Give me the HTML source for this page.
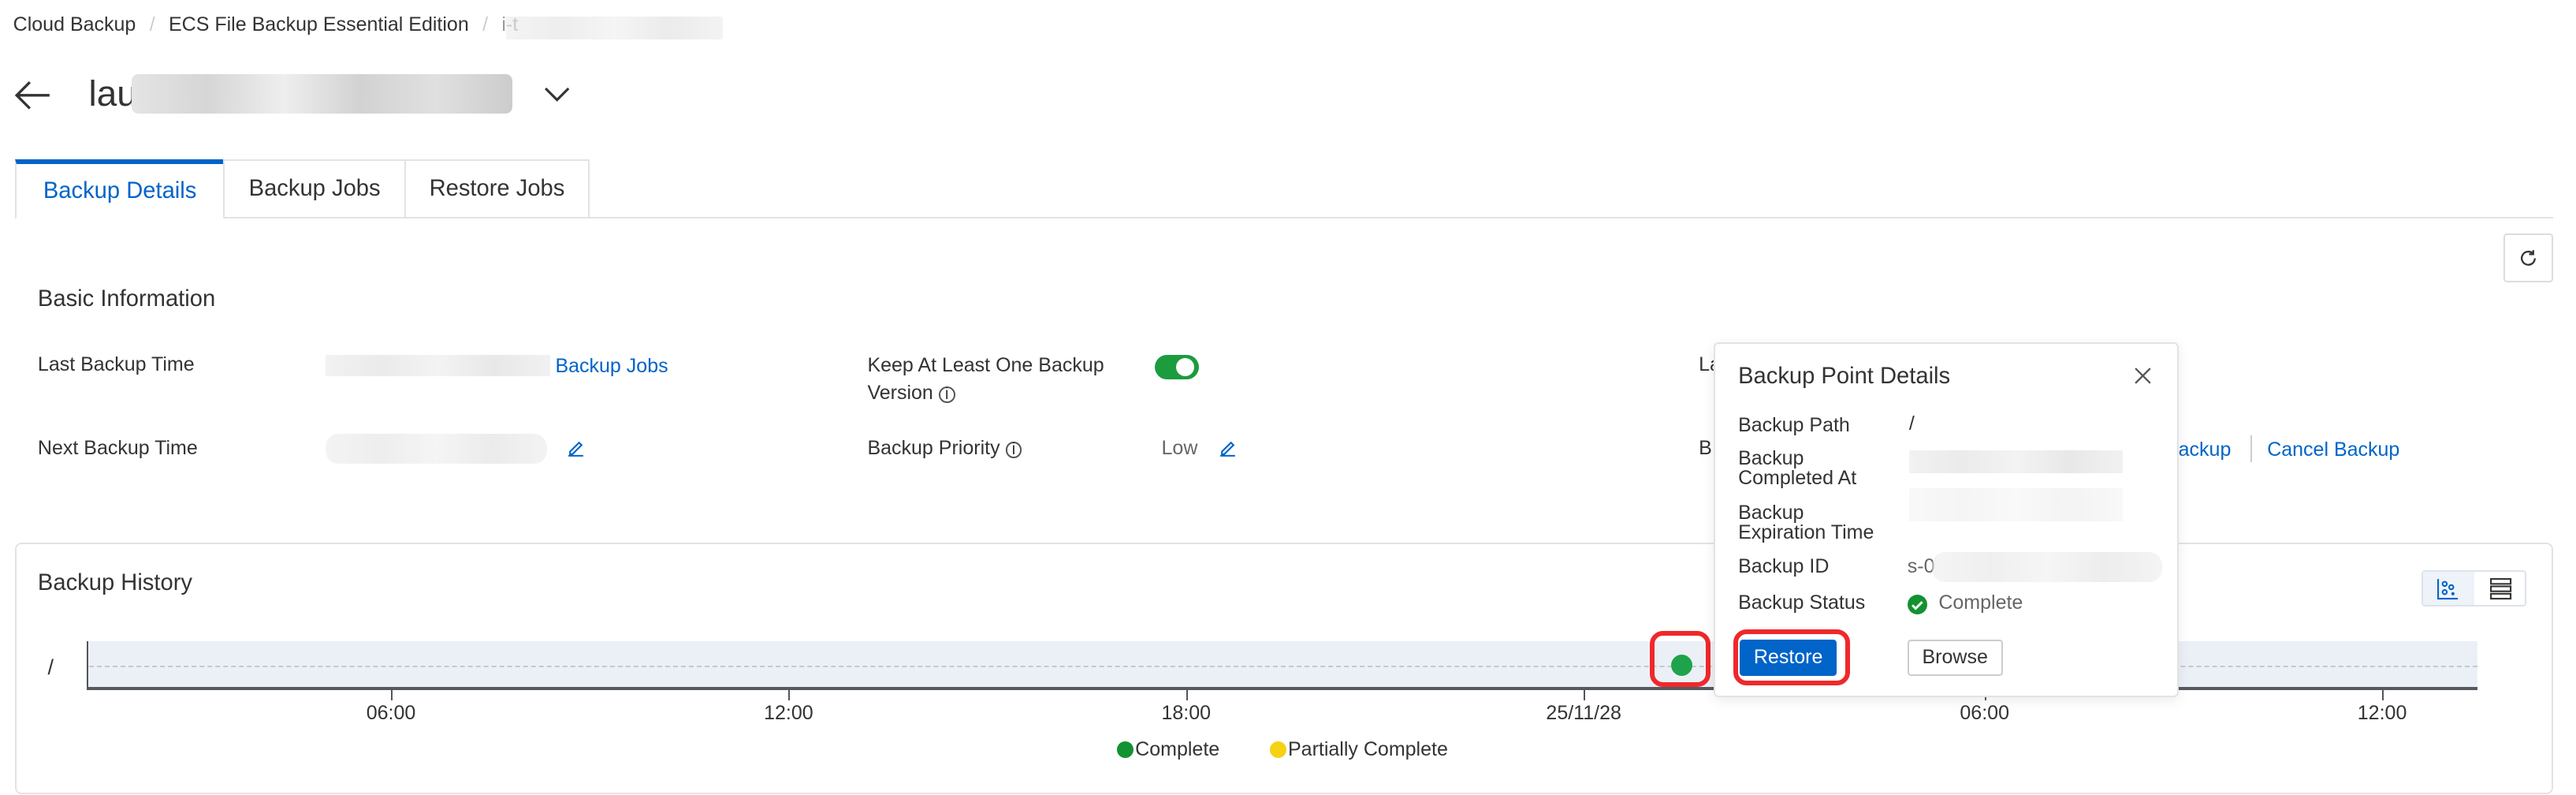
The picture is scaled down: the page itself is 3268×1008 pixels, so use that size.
<!DOCTYPE html>
<html><head><meta charset="utf-8">
<style>
*{box-sizing:border-box;margin:0;padding:0}
html,body{width:3268px;height:1008px;overflow:hidden;background:#fff}
#root{zoom:2.0842;width:1568px;height:484px;position:relative;font-family:"Liberation Sans",sans-serif;color:#333;font-size:12px}
.a{position:absolute;white-space:nowrap}
.blur{position:absolute;background:linear-gradient(90deg,#ececec,#e2e2e2,#eee,#dedede,#ebebeb);}
.link{color:#0064c8}
.lbl{color:#333;font-size:12px}
</style></head><body><div id="root">
<div class="a" style="left:8px;top:8px;font-size:12px;color:#333">Cloud Backup <span style="color:#ccc;margin:0 5px">/</span> ECS File Backup Essential Edition <span style="color:#ccc;margin:0 5px">/</span> <span style="color:#999">i-t</span></div>
<div class="blur" style="left:308px;top:10px;width:132px;height:14px;opacity:.6"></div>

<svg class="a" style="left:8px;top:48px" width="24" height="20" viewBox="0 0 24 20"><path d="M22 10H2M10 2L2 10l8 8" fill="none" stroke="#333" stroke-width="1.6"/></svg>
<div class="a" style="left:54px;top:44px;font-size:22px;color:#333">lau</div>
<div class="blur" style="left:80px;top:45px;width:232px;height:24px;border-radius:4px;background:linear-gradient(90deg,#e4e4e4,#d6d6d6,#eee,#d2d2d2,#e0e0e0,#ccc)"></div>
<svg class="a" style="left:331px;top:53px" width="16" height="10" viewBox="0 0 16 10"><path d="M1 1l7 7 7-7" fill="none" stroke="#333" stroke-width="1.5"/></svg>

<div class="a" style="left:136px;top:132px;width:1418px;height:1px;background:#e3e3e3"></div>
<div class="a" style="left:9px;top:97px;width:127px;height:36px;border-top:3px solid #0064c8;border-left:1px solid #e3e3e3;background:#fff;color:#0064c8;font-size:14px;text-align:center;line-height:33px">Backup Details</div>
<div class="a" style="left:136px;top:97px;width:111px;height:36px;border:1px solid #e3e3e3;font-size:14px;text-align:center;line-height:34px">Backup Jobs</div>
<div class="a" style="left:246px;top:97px;width:113px;height:36px;border:1px solid #e3e3e3;font-size:14px;text-align:center;line-height:34px">Restore Jobs</div>

<div class="a" style="left:1524px;top:142px;width:30px;height:30px;border:1px solid #ddd;border-radius:2px"></div>
<svg class="a" style="left:1533px;top:151px" width="12" height="12" viewBox="0 0 12 12"><path d="M10 6a4 4 0 1 1-1.2-2.9M9 1v2.5H6.5" fill="none" stroke="#333" stroke-width="1.1"/></svg>

<div class="a" style="left:23px;top:174px;font-size:14px;color:#333">Basic Information</div>

<div class="a lbl" style="left:23px;top:215px">Last Backup Time</div>
<div class="blur" style="left:198px;top:216px;width:137px;height:13px;opacity:.7"></div>
<div class="a link" style="left:338px;top:216px">Backup Jobs</div>
<div class="a lbl" style="left:528px;top:214px;line-height:17px">Keep At Least One Backup<br>Version <span style="font-size:10px;border:1px solid #555;border-radius:50%;display:inline-block;width:10px;height:10px;line-height:8px;text-align:center">i</span></div>
<div class="a" style="left:703px;top:216px;width:27px;height:15px;border-radius:8px;background:#1b9c3f"></div>
<div class="a" style="left:716px;top:218px;width:11px;height:11px;border-radius:50%;background:#fff"></div>
<div class="a lbl" style="left:1034px;top:215px">La</div>

<div class="a lbl" style="left:23px;top:266px">Next Backup Time</div>
<div class="blur" style="left:198px;top:264px;width:135px;height:18px;border-radius:8px;opacity:.6"></div>
<svg class="a" style="left:345px;top:267px" width="11" height="11" viewBox="0 0 11 11"><path d="M2 8l5.5-5.5 1.5 1.5L3.5 9.5H2zM1 10.5h9" fill="none" stroke="#0064c8" stroke-width="1"/></svg>
<div class="a lbl" style="left:528px;top:266px">Backup Priority <span style="font-size:10px;border:1px solid #555;border-radius:50%;display:inline-block;width:10px;height:10px;line-height:8px;text-align:center">i</span></div>
<div class="a" style="left:707px;top:266px;color:#666">Low</div>
<svg class="a" style="left:742px;top:267px" width="11" height="11" viewBox="0 0 11 11"><path d="M2 8l5.5-5.5 1.5 1.5L3.5 9.5H2zM1 10.5h9" fill="none" stroke="#0064c8" stroke-width="1"/></svg>
<div class="a lbl" style="left:1034px;top:266px">B</div>
<div class="a link" style="left:1318px;top:267px">Backup</div>
<div class="a" style="left:1370px;top:265px;width:1px;height:16px;background:#ccc"></div>
<div class="a link" style="left:1380px;top:267px">Cancel Backup</div>

<div class="a" style="left:9px;top:330px;width:1545px;height:153px;border:1px solid #e3e3e3;border-radius:4px"></div>
<div class="a" style="left:23px;top:347px;font-size:14px">Backup History</div>
<div class="a" style="left:1474px;top:347px;width:64px;height:22px;border:1px solid #dde3ea;border-radius:2px"></div>
<div class="a" style="left:1475px;top:348px;width:31px;height:20px;background:#eef3fa"></div>
<svg class="a" style="left:1483px;top:351px" width="14" height="14" viewBox="0 0 14 14"><path d="M1 1v12h12" fill="none" stroke="#0064c8"/><circle cx="5" cy="4" r="1.3" fill="none" stroke="#0064c8"/><circle cx="9" cy="6" r="1.3" fill="none" stroke="#0064c8"/><circle cx="5" cy="9" r="1.3" fill="none" stroke="#0064c8"/><circle cx="10" cy="10" r="1" fill="#0064c8"/></svg>
<svg class="a" style="left:1515px;top:351px" width="14" height="14" viewBox="0 0 14 14"><rect x="1" y="1" width="12" height="3" fill="none" stroke="#333"/><rect x="1" y="5.5" width="12" height="3" fill="none" stroke="#333"/><rect x="1" y="10" width="12" height="3" fill="none" stroke="#333"/></svg>

<div class="a" style="left:53px;top:390px;width:1455px;height:28px;background:#ebf0f7;border-left:1px solid #555"></div>
<div class="a" style="left:54px;top:405px;width:1454px;border-top:1px dashed #c5c9cf"></div>
<div class="a" style="left:53px;top:418px;width:1455px;height:2px;background:#555a60"></div>
<div class="a" style="left:29px;top:398px;font-size:13px">/</div>
<div class="a" style="left:238px;top:420px;width:1px;height:6px;background:#555"></div>
<div class="a" style="left:480px;top:420px;width:1px;height:6px;background:#555"></div>
<div class="a" style="left:722px;top:420px;width:1px;height:6px;background:#555"></div>
<div class="a" style="left:964px;top:420px;width:1px;height:6px;background:#555"></div>
<div class="a" style="left:1208px;top:420px;width:1px;height:6px;background:#555"></div>
<div class="a" style="left:1450px;top:420px;width:1px;height:6px;background:#555"></div>
<div class="a" style="left:218px;top:427px;width:40px;text-align:center">06:00</div>
<div class="a" style="left:460px;top:427px;width:40px;text-align:center">12:00</div>
<div class="a" style="left:702px;top:427px;width:40px;text-align:center">18:00</div>
<div class="a" style="left:934px;top:427px;width:60px;text-align:center">25/11/28</div>
<div class="a" style="left:1188px;top:427px;width:40px;text-align:center">06:00</div>
<div class="a" style="left:1430px;top:427px;width:40px;text-align:center">12:00</div>
<div class="a" style="left:1004px;top:384px;width:37px;height:34px;border:3px solid #f0282a;border-radius:8px"></div>
<div class="a" style="left:1017px;top:398px;width:13px;height:13px;border-radius:50%;background:#1fa34a"></div>
<div class="a" style="left:680px;top:451px;width:10px;height:10px;border-radius:50%;background:#129231"></div>
<div class="a" style="left:691px;top:449px">Complete</div>
<div class="a" style="left:773px;top:451px;width:10px;height:10px;border-radius:50%;background:#f6d214"></div>
<div class="a" style="left:784px;top:449px">Partially Complete</div>

<div class="a" style="left:1043px;top:208px;width:283px;height:216px;background:#fff;border:1px solid #e3e3e3;border-radius:3px;box-shadow:0 2px 8px rgba(0,0,0,.08)"></div>
<div class="a" style="left:1058px;top:221px;font-size:14px">Backup Point Details</div>
<svg class="a" style="left:1299px;top:223px" width="11" height="11" viewBox="0 0 11 11"><path d="M1 1l9 9M10 1l-9 9" stroke="#555" stroke-width="1.1"/></svg>
<div class="a lbl" style="left:1058px;top:252px">Backup Path</div>
<div class="a" style="left:1162px;top:251px">/</div>
<div class="a lbl" style="left:1058px;top:273px;line-height:12px">Backup<br>Completed At</div>
<div class="blur" style="left:1162px;top:274px;width:130px;height:14px;opacity:.7"></div>
<div class="blur" style="left:1162px;top:297px;width:130px;height:20px;opacity:.35"></div>
<div class="a lbl" style="left:1058px;top:306px;line-height:12px">Backup<br>Expiration Time</div>
<div class="a lbl" style="left:1058px;top:338px">Backup ID</div>
<div class="a" style="left:1161px;top:338px;color:#666">s-0</div>
<div class="blur" style="left:1176px;top:336px;width:140px;height:18px;border-radius:8px;opacity:.55"></div>
<div class="a lbl" style="left:1058px;top:360px">Backup Status</div>
<div class="a" style="left:1161px;top:362px;width:12px;height:12px;border-radius:50%;background:#129231"></div>
<svg class="a" style="left:1163px;top:364px" width="8" height="8" viewBox="0 0 8 8"><path d="M1 4l2 2 4-4" fill="none" stroke="#fff" stroke-width="1.4"/></svg>
<div class="a" style="left:1180px;top:360px;color:#666">Complete</div>
<div class="a" style="left:1055px;top:383px;width:71px;height:34px;border:3px solid #f0282a;border-radius:8px"></div>
<div class="a" style="left:1059px;top:389px;width:59px;height:22px;background:#0064c8;border-radius:2px;color:#fff;text-align:center;line-height:22px">Restore</div>
<div class="a" style="left:1161px;top:389px;width:58px;height:22px;border:1px solid #ccc;border-radius:2px;text-align:center;line-height:20px">Browse</div>
</div></body></html>
